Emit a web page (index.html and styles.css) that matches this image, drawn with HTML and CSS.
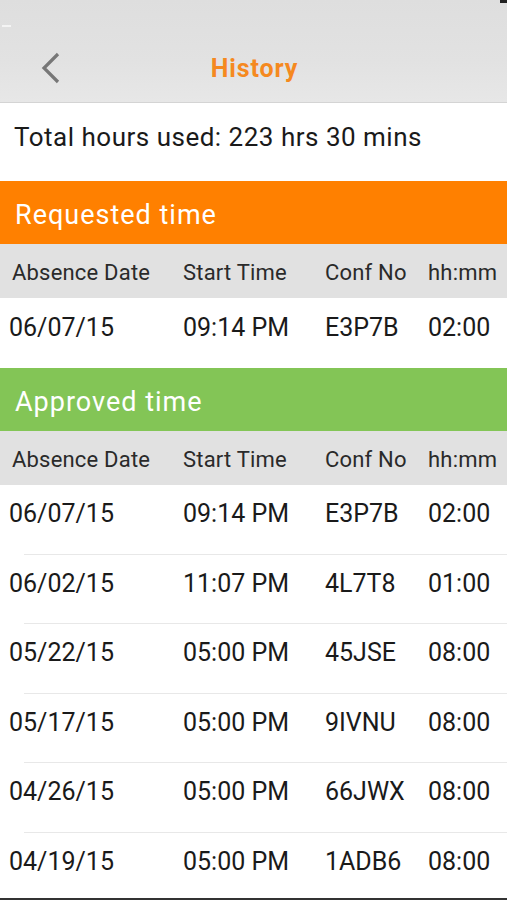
FILE: index.html
```html
<!DOCTYPE html>
<html lang="en">
<head>
<meta charset="UTF-8">
<meta name="viewport" content="width=device-width, initial-scale=1.0">
<link rel="stylesheet" href="styles.css">
</head>
<body>

<div class="topbar">
    <span class="status-dash"></span>
    <span class="status-corner"></span>
    <div class="nav">
        <span class="back">
            <svg width="20" height="32" viewBox="0 0 20 32"><polyline points="17,2 3,16 17,30" fill="none" stroke="#777" stroke-width="3.2"/></svg>
        </span>
        <h1>History</h1>
    </div>
</div>

<div class="total">Total hours used: 223 hrs 30 mins</div>

<div class="section-title requested">Requested time</div>
<div class="row head">
    <span>Absence Date</span><span>Start Time</span><span>Conf No</span><span>hh:mm</span>
</div>
<div class="row data single">
    <span>06/07/15</span><span>09:14 PM</span><span>E3P7B</span><span>02:00</span>
</div>

<div class="section-title approved">Approved time</div>
<div class="row head">
    <span>Absence Date</span><span>Start Time</span><span>Conf No</span><span>hh:mm</span>
</div>
<div class="approved-list">
    <div class="row data"><span>06/07/15</span><span>09:14 PM</span><span>E3P7B</span><span>02:00</span></div>
    <div class="row data"><span>06/02/15</span><span>11:07 PM</span><span>4L7T8</span><span>01:00</span></div>
    <div class="row data"><span>05/22/15</span><span>05:00 PM</span><span>45JSE</span><span>08:00</span></div>
    <div class="row data"><span>05/17/15</span><span>05:00 PM</span><span>9IVNU</span><span>08:00</span></div>
    <div class="row data"><span>04/26/15</span><span>05:00 PM</span><span>66JWX</span><span>08:00</span></div>
    <div class="row data"><span>04/19/15</span><span>05:00 PM</span><span>1ADB6</span><span>08:00</span></div>
</div>

<div class="navbar-edge"></div>

</body>
</html>
```

FILE: styles.css
```css
body {
    margin: 0;
    font-family: Roboto, "Noto Sans", sans-serif;
    color: #1a1a1a;
    background: #fff;
    overflow: hidden;
}

.topbar {
    position: relative;
    height: 102px;
    background: linear-gradient(#dedede, #e2e2e2 60%, #e7e7e7);
    border-bottom: 1px solid #d4d4d4;
}

.status-dash {
    position: absolute;
    left: 2px;
    top: 25px;
    width: 9px;
    height: 2px;
    background: #f4f4f4;
}

.status-corner {
    position: absolute;
    right: 0;
    top: 0;
    width: 7px;
    height: 3px;
    background: #222;
}

.nav {
    display: flex;
    align-items: center;
    justify-content: center;
    height: 68px;
    padding-top: 34px;
    position: relative;
}

.back {
    position: absolute;
    left: 41px;
    top: 52px;
    display: flex;
}

.nav h1 {
    margin: 0 0 0 2px;
    font-size: 25px;
    font-weight: bold;
    letter-spacing: 0.9px;
    color: #f5891f;
}

.total {
    height: 78px;
    display: flex;
    align-items: center;
    padding-left: 14px;
    padding-bottom: 11px;
    box-sizing: border-box;
    font-size: 26px;
    letter-spacing: 0.5px;
}

.section-title {
    height: 63px;
    display: flex;
    align-items: center;
    padding-left: 15px;
    padding-top: 4px;
    box-sizing: border-box;
    color: #fff;
    font-size: 27px;
    letter-spacing: 1px;
}

.requested {
    background: #ff8000;
}

.approved {
    background: #83c556;
}

.row {
    display: grid;
    grid-template-columns: 174px 142px 103px 1fr;
    align-items: center;
    padding-left: 9px;
    box-sizing: border-box;
}

.row.head {
    height: 54px;
    background: #e1e1e1;
    font-size: 22px;
    letter-spacing: 0.2px;
    color: #2a2a2a;
    padding-top: 2px;
}

.row.head span:first-child {
    padding-left: 3px;
}

.row.data {
    height: 69.5px;
    font-size: 25px;
    padding-bottom: 12px;
    position: relative;
}

.row.data.single {
    height: 70px;
    padding-bottom: 12px;
}

.approved-list .row.data::after {
    content: "";
    position: absolute;
    left: 24px;
    right: 0;
    bottom: 0;
    height: 1px;
    background: #e8e8e8;
}

.navbar-edge {
    position: fixed;
    left: 0;
    right: 0;
    bottom: 0;
    height: 2px;
    background: #333;
}
```
